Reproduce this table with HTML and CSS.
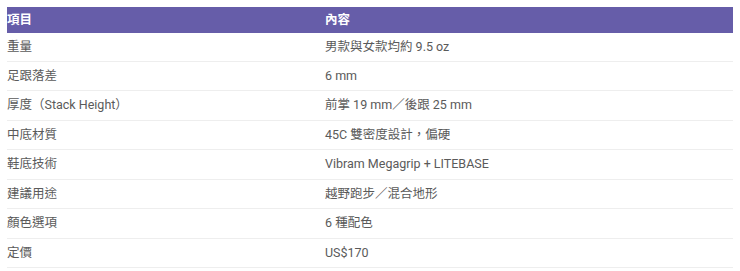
FILE: index.html
```html
<!DOCTYPE html>
<html lang="zh-Hant">
<head>
<meta charset="utf-8">
<link rel="stylesheet" href="styles.css">
</head>
<body>
<table class="spec">
  <thead>
    <tr><th class="c1">項目</th><th>內容</th></tr>
  </thead>
  <tbody>
    <tr><td>重量</td><td>男款與女款均約 9.5 oz</td></tr>
    <tr><td>足跟落差</td><td>6 mm</td></tr>
    <tr><td>厚度（Stack Height）</td><td>前掌 19 mm／後跟 25 mm</td></tr>
    <tr><td>中底材質</td><td>45C 雙密度設計，偏硬</td></tr>
    <tr><td>鞋底技術</td><td>Vibram Megagrip + LITEBASE</td></tr>
    <tr><td>建議用途</td><td>越野跑步／混合地形</td></tr>
    <tr><td>顏色選項</td><td>6 種配色</td></tr>
    <tr><td>定價</td><td>US$170</td></tr>
  </tbody>
</table>
</body>
</html>
```
FILE: styles.css
```css
html, body {
  margin: 0;
  padding: 0;
  background: #ffffff;
}
body {
  padding: 7px;
  font-family: Roboto, "Noto Sans CJK TC", sans-serif;
  font-size: 12.5px;
}
.spec {
  width: 726px;
  border-collapse: collapse;
  table-layout: fixed;
}
.spec th {
  background: #665da9;
  color: #ffffff;
  font-weight: 700;
  text-align: left;
  padding: 5px 0;
  line-height: 15.5px;
  font-size: 12.5px;
}
.spec th.c1 {
  width: 318px;
}
.spec td {
  color: #5a5a5a;
  padding: 5px 0;
  line-height: 18.45px;
  border-bottom: 1px solid #eeeeee;
}
```
